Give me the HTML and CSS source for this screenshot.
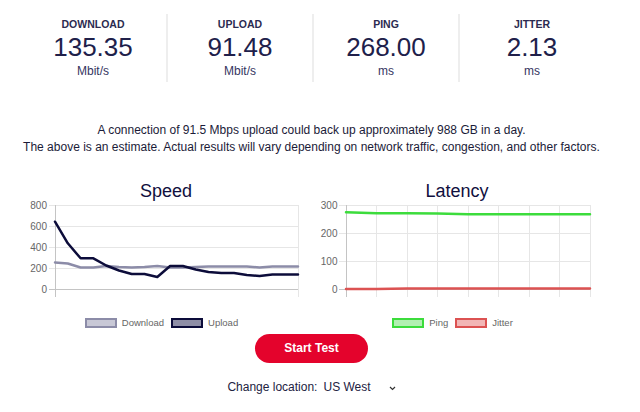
FILE: index.html
```html
<!DOCTYPE html>
<html lang="en">
<head>
<meta charset="utf-8">
<title>Speed Test</title>
<link rel="stylesheet" href="styles.css">
</head>
<body>
<div class="page">
  <div class="stats">
    <div class="stat"><div class="stat-label">DOWNLOAD</div><div class="stat-value">135.35</div><div class="stat-unit">Mbit/s</div></div>
    <div class="stat"><div class="stat-label">UPLOAD</div><div class="stat-value">91.48</div><div class="stat-unit">Mbit/s</div></div>
    <div class="stat"><div class="stat-label">PING</div><div class="stat-value">268.00</div><div class="stat-unit">ms</div></div>
    <div class="stat"><div class="stat-label">JITTER</div><div class="stat-value">2.13</div><div class="stat-unit">ms</div></div>
  </div>

  <p class="note">A connection of 91.5 Mbps upload could back up approximately 988 GB in a day.<br>The above is an estimate. Actual results will vary depending on network traffic, congestion, and other factors.</p>

  <div class="charts">
    <div class="chart">
      <div class="chart-title">Speed</div>
      <svg class="plot" width="282" height="100" viewBox="25 201 282 100">
        <g class="grid" shape-rendering="crispEdges">
          <line x1="49" y1="205.5" x2="298" y2="205.5"/>
          <line x1="49" y1="226.5" x2="298" y2="226.5"/>
          <line x1="49" y1="247.5" x2="298" y2="247.5"/>
          <line x1="49" y1="268.5" x2="298" y2="268.5"/>
          <line x1="298.5" y1="205" x2="298.5" y2="297"/>
          <line class="axis" x1="55.5" y1="205" x2="55.5" y2="297"/>
          <line class="axis" x1="49" y1="289.5" x2="298" y2="289.5"/>
        </g>
        <g class="ylabels">
          <text x="47" y="208.5">800</text>
          <text x="47" y="229.5">600</text>
          <text x="47" y="250.5">400</text>
          <text x="47" y="271.5">200</text>
          <text x="47" y="292.5">0</text>
        </g>
        <polyline class="line download" points="55,262.5 67.8,263.5 80.6,267.5 93.4,267.5 106.2,266 119,267 131.7,267.5 144.5,267 157.3,266 170.1,267.5 182.9,267.5 195.7,267 208.5,266.5 221.3,266.5 234,266.5 246.8,266.5 259.6,267.5 272.4,266.5 285.2,266.5 298,266.5"/>
        <polyline class="line upload" points="55,221.7 67.8,243.3 80.6,258.3 93.4,258.3 106.2,265.5 119,270.5 131.7,274 144.5,274 157.3,277 170.1,266 182.9,266 195.7,269.5 208.5,272 221.3,273 234,273 246.8,275 259.6,276 272.4,274.5 285.2,274.5 298,274.5"/>
      </svg>
      <div class="legend">
        <span class="legend-item"><span class="swatch sw-download"></span>Download</span>
        <span class="legend-item"><span class="swatch sw-upload"></span>Upload</span>
      </div>
    </div>

    <div class="chart">
      <div class="chart-title">Latency</div>
      <svg class="plot" width="282" height="100" viewBox="316 201 282 100">
        <g class="grid" shape-rendering="crispEdges">
          <line x1="339" y1="205.5" x2="590" y2="205.5"/>
          <line x1="339" y1="233.5" x2="590" y2="233.5"/>
          <line x1="339" y1="261.5" x2="590" y2="261.5"/>
          <line x1="376.5" y1="205" x2="376.5" y2="297"/>
          <line x1="407.5" y1="205" x2="407.5" y2="297"/>
          <line x1="437.5" y1="205" x2="437.5" y2="297"/>
          <line x1="468.5" y1="205" x2="468.5" y2="297"/>
          <line x1="498.5" y1="205" x2="498.5" y2="297"/>
          <line x1="529.5" y1="205" x2="529.5" y2="297"/>
          <line x1="559.5" y1="205" x2="559.5" y2="297"/>
          <line x1="590.5" y1="205" x2="590.5" y2="297"/>
          <line class="axis" x1="346.5" y1="205" x2="346.5" y2="297"/>
          <line class="axis" x1="339" y1="289.5" x2="590" y2="289.5"/>
        </g>
        <g class="ylabels">
          <text x="337.5" y="208.5">300</text>
          <text x="337.5" y="236.5">200</text>
          <text x="337.5" y="264.5">100</text>
          <text x="337.5" y="292.5">0</text>
        </g>
        <polyline class="line ping" points="346,212.3 376.5,213.2 407,213.3 437.5,213.4 468,214.2 498.5,214.3 529,214.3 559.5,214.3 590,214.3"/>
        <polyline class="line jitter" points="346,289 376.5,289 407,288.5 437.5,288.5 468,288.5 498.5,288.5 529,288.5 559.5,288.5 590,288.5"/>
      </svg>
      <div class="legend">
        <span class="legend-item"><span class="swatch sw-ping"></span>Ping</span>
        <span class="legend-item"><span class="swatch sw-jitter"></span>Jitter</span>
      </div>
    </div>
  </div>

  <div class="actions"><button class="start" type="button">Start Test</button></div>

  <div class="location">
    <span class="location-label">Change location:</span>
    <span class="select">US West
      <svg class="chev" width="7" height="5" viewBox="0 0 7 5"><path d="M1 1 L3.5 3.5 L6 1" fill="none" stroke="#333" stroke-width="1.2"/></svg>
    </span>
  </div>
</div>
</body>
</html>
```

FILE: styles.css
```css
* { box-sizing: border-box; }

body {
  margin: 0;
  background: #fff;
  font-family: "Liberation Sans", Arial, sans-serif;
  color: #1d1d3d;
}

.page {
  width: 623px;
}

/* ---------- stats ---------- */
.stats {
  display: flex;
  width: 584px;
  margin: 14px 0 0 20px;
}

.stat {
  flex: 0 0 146px;
  height: 68px;
  padding-top: 4px;
  text-align: center;
}

.stat + .stat {
  border-left: 2px solid #eeeeee;
}

.stat-label {
  font-size: 10.5px;
  line-height: 13px;
  font-weight: bold;
  color: #2b2b50;
}

.stat-value {
  font-size: 26px;
  line-height: 32px;
  color: #20204a;
}

.stat-unit {
  margin-top: 1px;
  font-size: 12px;
  line-height: 15px;
  color: #35355f;
}

/* ---------- note ---------- */
.note {
  margin: 40px 0 0;
  font-size: 12px;
  line-height: 17px;
  text-align: center;
  color: #1b1b38;
}

/* ---------- charts ---------- */
.charts {
  display: flex;
  gap: 9px;
  margin-top: 24.7px;
  padding-left: 25px;
}

.chart {
  width: 282px;
}

.chart-title {
  font-size: 18px;
  line-height: 20px;
  text-align: center;
  color: #10103e;
}

.plot {
  display: block;
}

.grid line {
  stroke: #e6e6e6;
  stroke-width: 1;
}

.grid line.axis {
  stroke: #c4c4c4;
}

.ylabels text {
  font-family: "Liberation Sans", Arial, sans-serif;
  font-size: 10px;
  fill: #666;
  text-anchor: end;
}

.line {
  fill: none;
  stroke-width: 2.5;
  stroke-linejoin: round;
  stroke-linecap: round;
}

.download { stroke: #8c8ca8; }
.upload { stroke: #0c0c3a; }
.ping { stroke: #3cdc3c; }
.jitter { stroke: #dc5252; }

.legend {
  display: flex;
  justify-content: center;
  gap: 7px;
  margin-top: 15px;
  padding-right: 9px;
  font-size: 9.5px;
  line-height: 14px;
  color: #666;
}

.legend-item {
  display: flex;
  align-items: center;
  gap: 5px;
}

.swatch {
  width: 32px;
  height: 10px;
  border: 2px solid;
}

.sw-download { background: #c8c8d6; border-color: #8c8ca8; }
.sw-upload { background: #8e8ea6; border-color: #0c0c3a; }
.sw-ping { background: #b2f0b2; border-color: #3cdc3c; }
.sw-jitter { background: #f2b6b6; border-color: #dc5252; }

/* ---------- actions ---------- */
.actions {
  display: flex;
  justify-content: center;
  margin-top: 4px;
}

.start {
  width: 113px;
  height: 29px;
  border: 0;
  border-radius: 15px;
  background: #e4032c;
  color: #fff;
  font-family: "Liberation Sans", Arial, sans-serif;
  font-size: 12px;
  font-weight: bold;
  padding: 0;
}

.location {
  display: flex;
  justify-content: center;
  align-items: center;
  gap: 6px;
  margin-top: 17.6px;
  font-size: 12px;
  line-height: 15px;
  color: #22223f;
}

.select {
  display: flex;
  align-items: center;
  gap: 18px;
}

.chev {
  display: block;
  margin-top: 1px;
}
```
